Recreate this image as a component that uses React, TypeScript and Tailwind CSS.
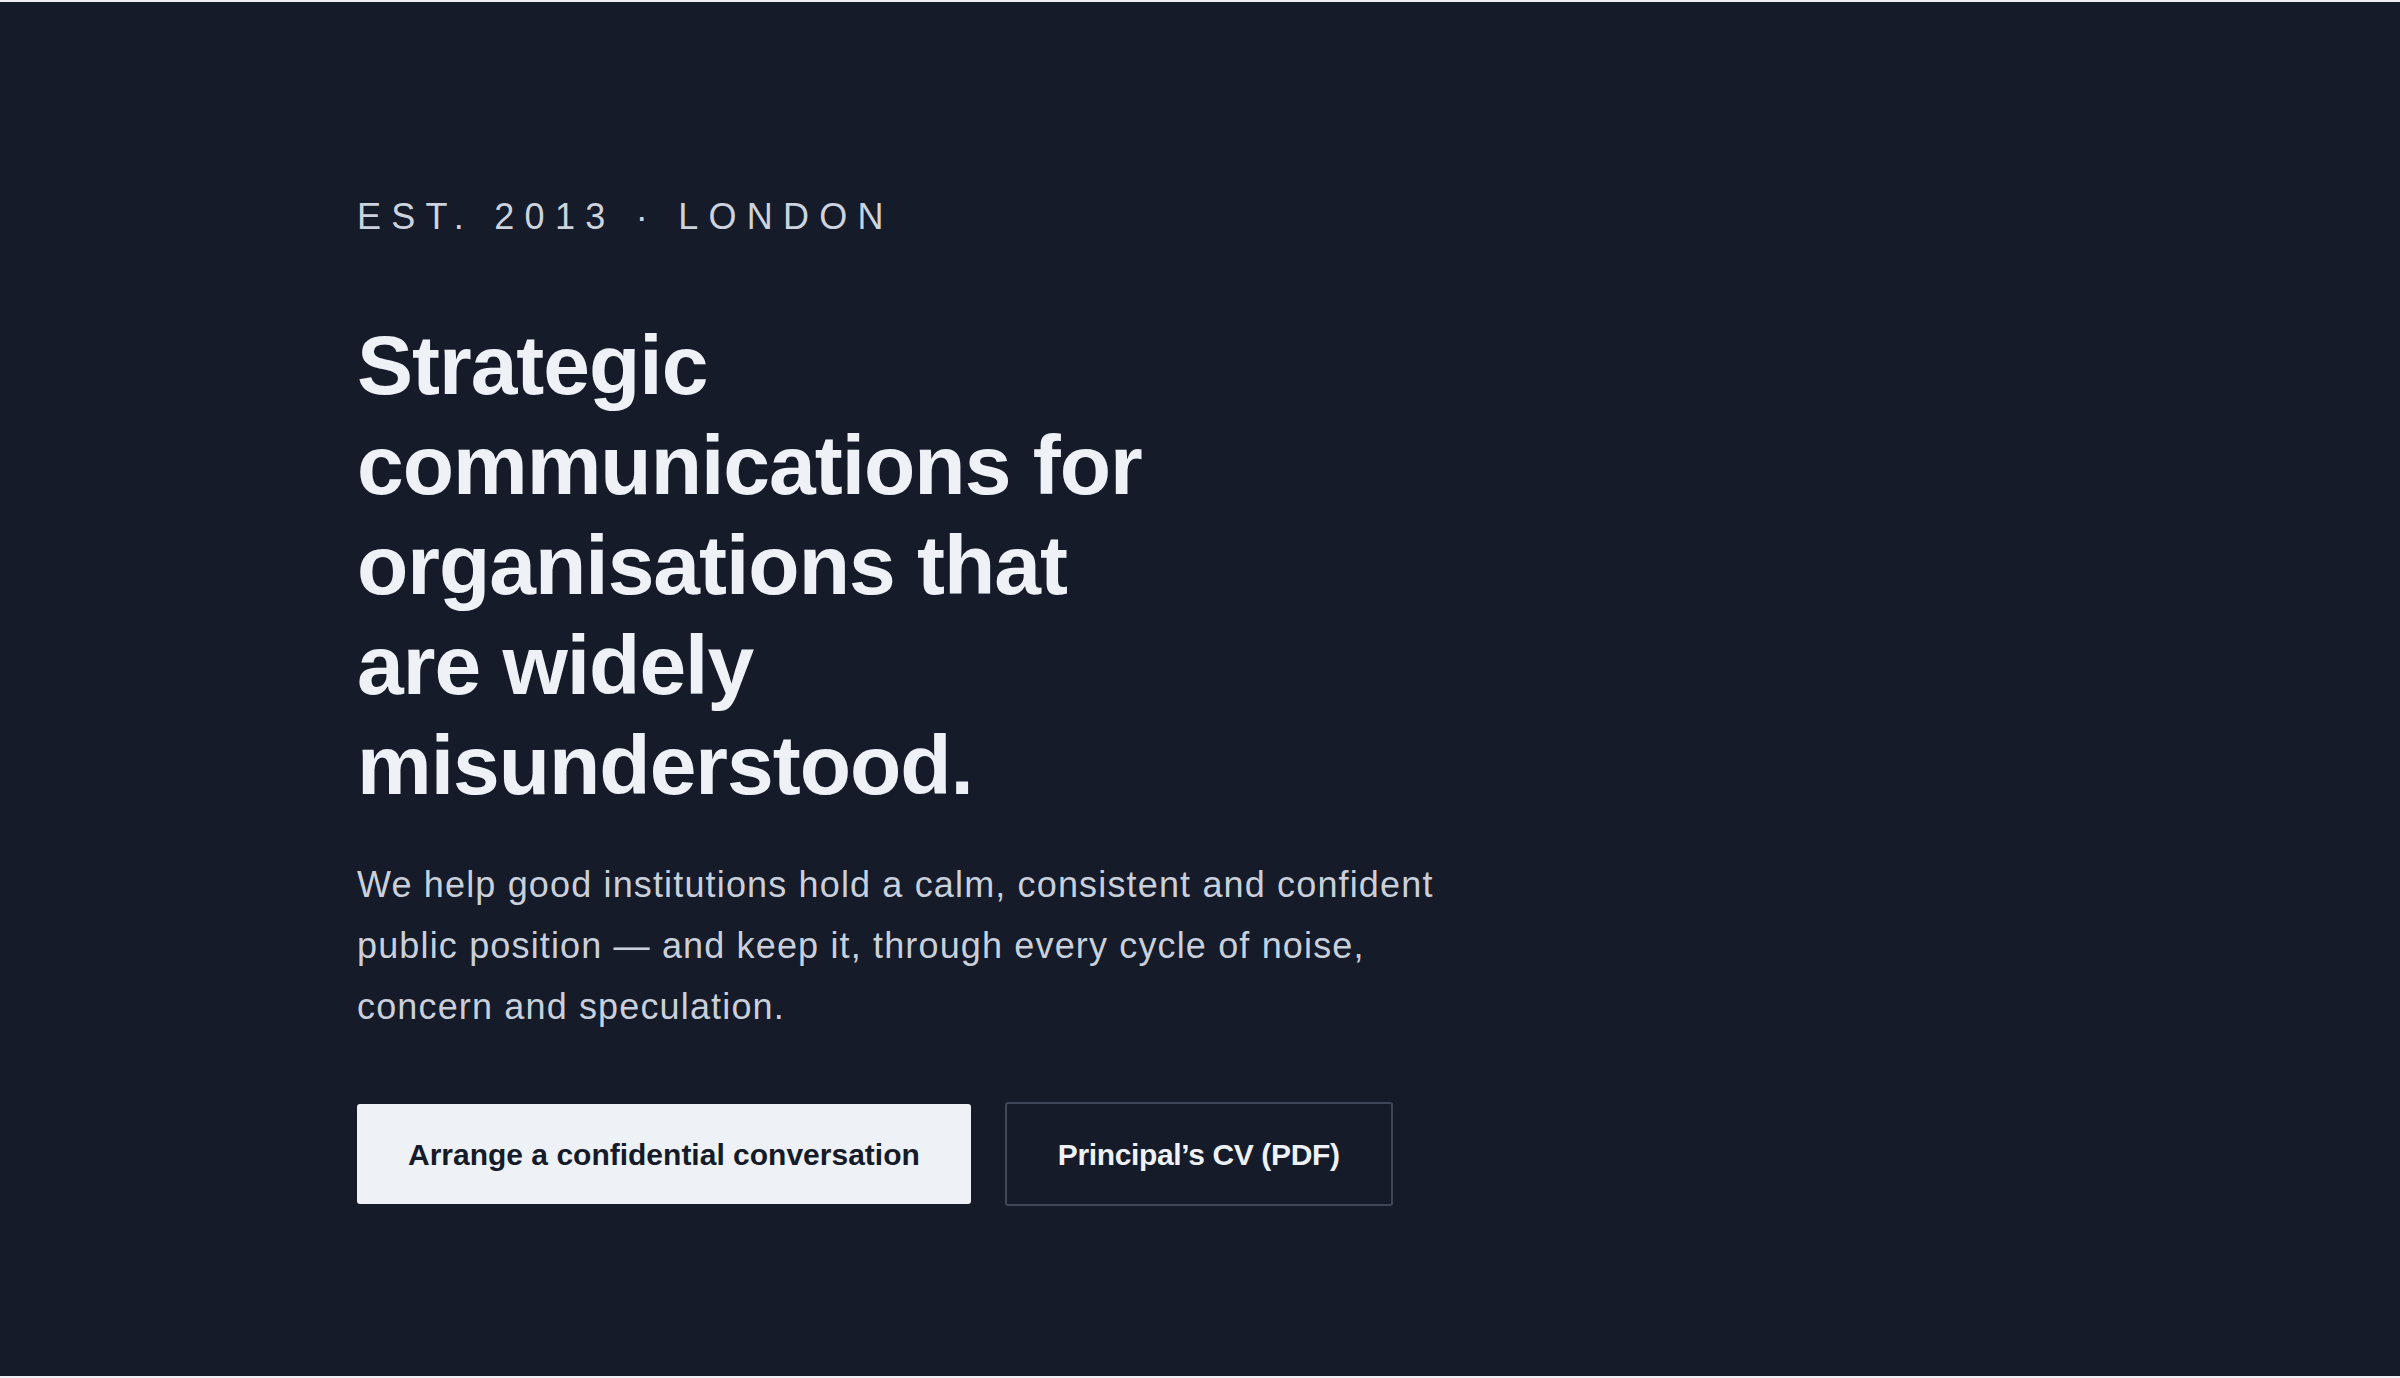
export default function App() {
  return (
    <div className="min-h-screen bg-[#eef0f3] pt-[2px] font-['Liberation_Sans',Arial,sans-serif]">
      <section className="h-[1374px] bg-[#151b28]">
        <div className="mx-auto w-full max-w-[1686px] pt-[197px]">
          <p className="text-[36px] leading-none tracking-[0.285em] text-[#cdd3de]">
            EST. 2013 · LONDON
          </p>

          <h1 className="mt-[80px] max-w-[820px] text-[84px] font-bold leading-[100px] tracking-[-0.012em] text-[#eef1f6]">
            Strategic communications for organisations that are widely misunderstood.
          </h1>

          <p className="mt-[39px] max-w-[1110px] text-[36px] leading-[61px] tracking-[0.032em] text-[#c9d0dc]">
            We help good institutions hold a calm, consistent and confident public position — and keep it,
            through every cycle of noise, concern and speculation.
          </p>

          <div className="mt-[65px] flex items-center gap-[34px]">
            <button
              type="button"
              className="flex h-[100px] items-center rounded-[3px] bg-[#eef1f6] px-[51px] text-[30px] font-bold text-[#151b28]"
            >
              Arrange a confidential conversation
            </button>
            <button
              type="button"
              className="flex h-[104px] items-center rounded-[3px] border-2 border-[#3e4859] px-[51px] text-[30px] font-bold tracking-[-0.012em] text-[#eef1f6]"
            >
              Principal’s CV (PDF)
            </button>
          </div>
        </div>
      </section>
    </div>
  );
}
